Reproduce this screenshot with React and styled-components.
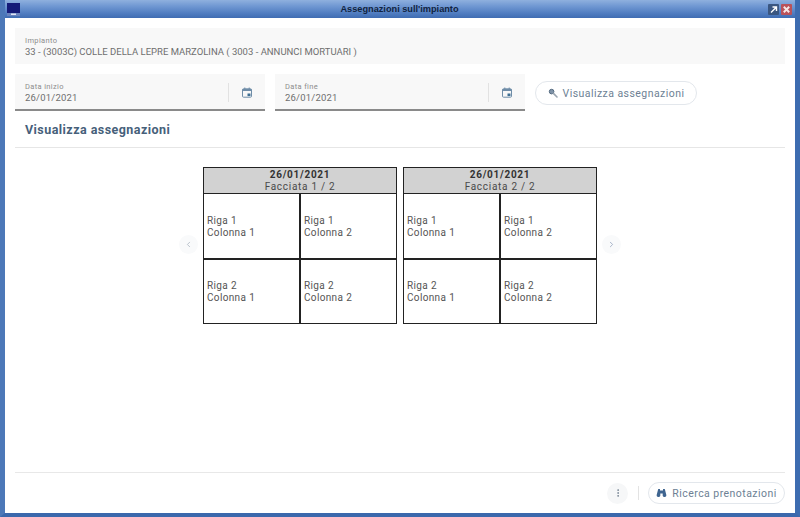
import React from 'react';
import styled, { createGlobalStyle } from 'styled-components';
import { ChevronLeft, ChevronRight, EllipsisVertical } from 'lucide-react';

const GlobalStyle = createGlobalStyle`
    html, body {
        margin: 0;
        padding: 0;
        background: #fff;
        font-family: Roboto, "Liberation Sans", sans-serif;
    }
`

const Window = styled.div`
    width: 800px;
    height: 517px;
    box-sizing: border-box;
    display: flex;
    flex-direction: column;
    background: #fff;
    border-left: 5px solid #4c78b8;
    border-right: 5px solid #3d6cb0;
    border-bottom: 4px solid #3b68ac;
    overflow: hidden;
`

const TitleBar = styled.div`
    height: 18px;
    flex-shrink: 0;
    margin: 0 -5px;
    padding: 0 8px 0 7px;
    display: flex;
    align-items: center;
    background: linear-gradient(#8fb0de 0, #6f97d2 35%, #4f7cc0 75%, #3f6cb2 100%);
`

const TitleSide = styled.div`
    flex: 1 1 0;
    display: flex;
    gap: 2px;
    justify-content: ${p => p.end ? 'flex-end' : 'flex-start'};
`

const Title = styled.div`
    font-family: "Liberation Sans", Arial, sans-serif;
    font-size: 9.2px;
    font-weight: bold;
    color: #10233f;
`

const Body = styled.div`
    flex-grow: 1;
    display: flex;
    flex-direction: column;
    padding: 10px 10px 0;
    min-height: 0;
`

const Field = styled.div`
    box-sizing: border-box;
    height: ${p => p.underlined ? '37px' : '36px'};
    padding: 2px 10px 0;
    background: #f8f8f8;
    display: flex;
    align-items: center;
    width: ${p => p.width || 'auto'};
    border-bottom: ${p => p.underlined ? '2px solid #8a8a8a' : 'none'};
`

const FieldText = styled.div`
    flex-grow: 1;
    display: flex;
    flex-direction: column;
    font-size: 9.5px;
    letter-spacing: ${p => p.tight ? '0' : '0.2px'};
    color: #6f6f6f;
    line-height: 12px;

    .label{
        font-size: 7.5px;
        line-height: 10px;
        letter-spacing: 0.35px;
        color: #8d8d8d;
    }
`

const CalendarSlot = styled.div`
    box-sizing: border-box;
    height: 19px;
    width: 24px;
    margin-right: 3px;
    border-left: 1px solid #e2e2e2;
    display: flex;
    align-items: center;
    justify-content: flex-end;
`

const DateRow = styled.div`
    display: flex;
    align-items: center;
    gap: 10px;
    margin-top: 10px;
`

const PillButton = styled.button`
    box-sizing: border-box;
    width: ${p => p.small ? '137px' : '162px'};
    height: ${p => p.small ? '22px' : '24px'};
    margin-top: ${p => p.small ? '0' : '1px'};
    padding: 0;
    border: 1px solid #e3e7ec;
    border-radius: 12px;
    background: #fff;
    display: flex;
    align-items: center;
    justify-content: center;
    gap: 5px;
    font-family: Roboto, "Liberation Sans", sans-serif;
    font-size: 10.5px;
    letter-spacing: 0.45px;
    color: #6d7f94;
    white-space: nowrap;
`

const Heading = styled.div`
    margin-top: 10px;
    padding: 0 10px 9px;
    border-bottom: 1px solid #e6e6e6;
    font-size: 12.5px;
    line-height: 17px;
    font-weight: 700;
    letter-spacing: 0.45px;
    color: #46607a;
`

const Carousel = styled.div`
    flex-grow: 1;
    padding-top: 19px;
    display: flex;
    justify-content: center;
    align-items: flex-start;
`

const NavButton = styled.div`
    width: 19px;
    height: 19px;
    margin: 68px ${p => p.prev ? '5px' : '0'} 0 ${p => p.prev ? '0' : '5px'};
    border-radius: 50%;
    background: #f9fafb;
    display: flex;
    align-items: center;
    justify-content: center;
    color: ${p => p.prev ? '#a6b0bc' : '#8d9db8'};
`

const Sides = styled.div`
    display: flex;
    gap: 6px;
`

const Side = styled.div`
    box-sizing: border-box;
    width: 194px;
    border: 1px solid #222;
    color: #555;
`

const SideHeader = styled.div`
    box-sizing: border-box;
    height: 26px;
    padding-top: 1px;
    background: #d2d2d2;
    border-bottom: 1px solid #222;
    text-align: center;
    font-size: 10px;
    line-height: 12px;
    letter-spacing: 0.72px;
    color: #4a4a4a;

    b{
        display: block;
        color: #333;
    }
`

const Cells = styled.div`
    display: grid;
    grid-template-columns: 97px 95px;
`

const Cell = styled.div`
    box-sizing: border-box;
    height: ${p => p.row === 1 ? '66px' : '63px'};
    padding: ${p => p.row === 1 ? '2px' : '0'} 0 0 3px;
    display: flex;
    flex-direction: column;
    justify-content: center;
    font-size: 10px;
    line-height: 12px;
    letter-spacing: 0.35px;
    color: #555;
    border-right: ${p => p.col === 1 ? '2px solid #222' : 'none'};
    border-bottom: ${p => p.row === 1 ? '2px solid #222' : 'none'};
`

const Footer = styled.div`
    height: 40px;
    flex-shrink: 0;
    border-top: 1px solid #e8e8e8;
    display: flex;
    align-items: center;
    justify-content: flex-end;
`

const MenuButton = styled.div`
    width: 21px;
    height: 21px;
    border-radius: 50%;
    background: #f6f7f8;
    display: flex;
    align-items: center;
    justify-content: center;
    color: #71808f;
`

const Separator = styled.div`
    width: 1px;
    height: 14px;
    margin: 0 9px 0 10px;
    background: #e3e3e3;
`

const CalendarIcon = () => (
    <svg width="10" height="11" viewBox="0 0 10 11">
        <rect x="0.5" y="1.8" width="9" height="8.4" rx="1" fill="none" stroke="#6f8da8" strokeWidth="1" />
        <rect x="0.5" y="2" width="9" height="2" fill="#6f8da8" />
        <rect x="2.3" y="0.5" width="1" height="2" fill="#6f8da8" />
        <rect x="6.7" y="0.5" width="1" height="2" fill="#6f8da8" />
        <rect x="5.5" y="6.5" width="3" height="2.6" fill="#3f6f94" />
    </svg>
)

const SearchIcon = () => (
    <svg width="10" height="10" viewBox="0 0 10 10">
        <circle cx="3.6" cy="3.6" r="2.3" fill="#7f93a8" stroke="#52697f" strokeWidth="1" />
        <path d="M5.4 5.4 L9 9" stroke="#9aa5b0" strokeWidth="1.6" strokeLinecap="round" />
    </svg>
)

const BinocularsIcon = () => (
    <svg width="11" height="10" viewBox="0 0 11 10">
        <path d="M2.2 1h1.8v1.5h3V1h1.8l1.6 6.2a1.9 1.9 0 0 1-3.7.6V5.5H4.3v2.3a1.9 1.9 0 0 1-3.7-.6z" fill="#3f6590" />
    </svg>
)

const Logo = () => (
    <svg width="13" height="13" viewBox="0 0 13 13">
        <rect width="13" height="10" fill="#141a78" />
        <rect y="10" width="13" height="3" fill="#6a83bd" />
        <rect x="4" y="10.5" width="5" height="1.5" fill="#dfe6f5" />
    </svg>
)

const MaximizeIcon = () => (
    <svg width="11" height="11" viewBox="0 0 11 11">
        <rect width="11" height="11" rx="1" fill="#3a5680" />
        <path d="M3 8.5 L8 3.5 M4.5 3 H8.5 V7" stroke="#fff" strokeWidth="1.4" fill="none" />
    </svg>
)

const CloseIcon = () => (
    <svg width="11" height="11" viewBox="0 0 11 11">
        <rect width="11" height="11" rx="1" fill="#b9525a" />
        <path d="M2.8 2.8 L8.2 8.2 M8.2 2.8 L2.8 8.2" stroke="#f6e6e6" strokeWidth="2" />
    </svg>
)

const DateField = ({label, value}) => (
    <Field width="250px" underlined>
        <FieldText>
            <span className="label">{label}</span>
            <span>{value}</span>
        </FieldText>
        <CalendarSlot>
            <CalendarIcon />
        </CalendarSlot>
    </Field>
)

const FaceTable = ({face}) => (
    <Side>
        <SideHeader>
            <b>26/01/2021</b>
            Facciata {face} / 2
        </SideHeader>
        <Cells>
            {[1, 2].map(row => [1, 2].map(col => (
                <Cell key={`${row}-${col}`} row={row} col={col}>
                    <span>Riga {row}</span>
                    <span>Colonna {col}</span>
                </Cell>
            )))}
        </Cells>
    </Side>
)

const App = () => {
    return (
        <Window>
            <GlobalStyle />
            <TitleBar>
                <TitleSide>
                    <Logo />
                </TitleSide>
                <Title>Assegnazioni sull'impianto</Title>
                <TitleSide end>
                    <MaximizeIcon />
                    <CloseIcon />
                </TitleSide>
            </TitleBar>
            <Body>
                <Field>
                    <FieldText tight>
                        <span className="label">Impianto</span>
                        <span>33 - (3003C) COLLE DELLA LEPRE MARZOLINA ( 3003 - ANNUNCI MORTUARI )</span>
                    </FieldText>
                </Field>
                <DateRow>
                    <DateField label="Data inizio" value="26/01/2021" />
                    <DateField label="Data fine" value="26/01/2021" />
                    <PillButton>
                        <SearchIcon />
                        Visualizza assegnazioni
                    </PillButton>
                </DateRow>
                <Heading>Visualizza assegnazioni</Heading>
                <Carousel>
                    <NavButton prev>
                        <ChevronLeft size={9} />
                    </NavButton>
                    <Sides>
                        <FaceTable face={1} />
                        <FaceTable face={2} />
                    </Sides>
                    <NavButton>
                        <ChevronRight size={9} />
                    </NavButton>
                </Carousel>
                <Footer>
                    <MenuButton>
                        <EllipsisVertical size={10} />
                    </MenuButton>
                    <Separator />
                    <PillButton small>
                        <BinocularsIcon />
                        Ricerca prenotazioni
                    </PillButton>
                </Footer>
            </Body>
        </Window>
    )
}

export default App;
